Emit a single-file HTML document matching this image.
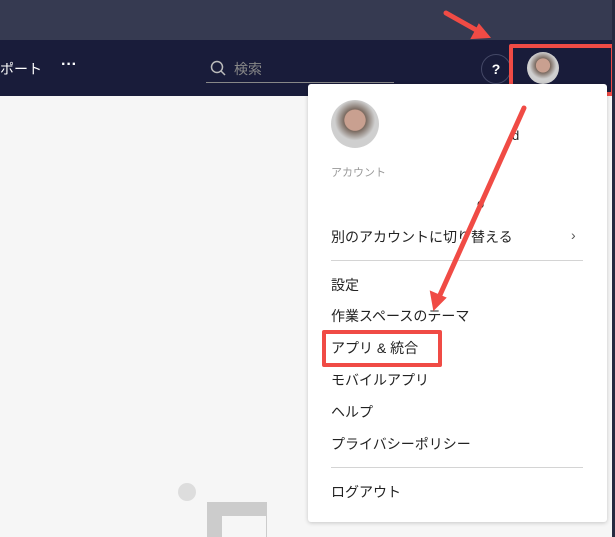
<!DOCTYPE html>
<html><head><meta charset="utf-8"><style>
body{margin:0;width:615px;height:537px;overflow:hidden;position:relative;background:#f6f6f6;font-family:"Liberation Sans","Noto Sans CJK JP",sans-serif}
.top{position:absolute;left:0;top:0;width:615px;height:40px;background:#363a51}
.nav{position:absolute;left:0;top:40px;width:615px;height:56px;background:#191c3a}
.rs{position:absolute;right:0;top:0;width:3px;height:537px;background:#262a40}
.t{position:absolute;white-space:nowrap}
.menu{position:absolute;left:308px;top:84px;width:299px;height:438px;background:#fff;border-radius:3px;box-shadow:0 1px 4px rgba(0,0,0,.2)}
.mi{position:absolute;left:23px;font-size:14px;color:#222;white-space:nowrap}
.hr{position:absolute;left:23px;width:252px;height:1px;background:#d4d4d4}
.av{position:absolute;border-radius:50%;background:radial-gradient(circle at 50% 42%,#c9a090 0 28%,#7a6a60 30%,#cfcfcf 55%);overflow:hidden}
</style></head><body>
<div class="top"></div>
<div class="nav"></div>
<div class="t" style="left:0;top:59px;color:#fff;font-size:14px">ポート</div>
<div class="t" style="left:61px;top:56px;color:#fff;font-size:16px;font-weight:bold">···</div>
<svg style="position:absolute;left:210px;top:60px" width="16" height="16"><circle cx="7" cy="7" r="5.5" fill="none" stroke="#bbb" stroke-width="1.5"/><line x1="11" y1="11" x2="15" y2="15" stroke="#bbb" stroke-width="1.5"/></svg>
<div class="t" style="left:234px;top:59px;color:#888;font-size:14px">検索</div>
<div style="position:absolute;left:206px;top:82px;width:188px;height:1px;background:#888"></div>
<div style="position:absolute;left:481px;top:54px;width:28px;height:28px;border:1px solid #444866;border-radius:50%;color:#fff;font-weight:bold;font-size:14px;text-align:center;line-height:28px">?</div>
<div class="av" style="left:527px;top:52px;width:32px;height:32px"></div>
<div style="position:absolute;left:509px;top:44px;width:98px;height:44px;border:4px solid #f04b45;border-radius:2px"></div>
<div class="menu">
<div class="av" style="left:23px;top:16px;width:48px;height:48px"></div>
<div class="t" style="left:204px;top:44px;font-size:13px;color:#222">d</div>
<div class="t" style="left:23px;top:80px;font-size:11px;color:#999">アカウント</div>
<div class="t" style="left:169px;top:112px;font-size:13px;color:#222">o</div>
<div class="mi" style="top:143px">別のアカウントに切り替える</div>
<div class="t" style="left:263px;top:143px;font-size:14px;color:#555">›</div>
<div class="hr" style="top:176px"></div>
<div class="mi" style="top:191px">設定</div>
<div class="mi" style="top:222px">作業スペースのテーマ</div>
<div class="mi" style="top:254px">アプリ &amp; 統合</div>
<div class="mi" style="top:286px">モバイルアプリ</div>
<div class="mi" style="top:318px">ヘルプ</div>
<div class="mi" style="top:350px">プライバシーポリシー</div>
<div class="hr" style="top:383px"></div>
<div class="mi" style="top:398px">ログアウト</div>
</div>
<div style="position:absolute;left:322px;top:330px;width:112px;height:29px;border:4px solid #f04b45;border-radius:2px"></div>
<div style="position:absolute;left:178px;top:483px;width:18px;height:18px;border-radius:50%;background:#ddd"></div>
<div style="position:absolute;left:207px;top:502px;width:60px;height:35px;background:#ccc"></div>
<div style="position:absolute;left:222px;top:516px;width:44px;height:21px;background:#f6f6f6"></div>
<svg style="position:absolute;left:0;top:0" width="615" height="537">
<g stroke="#f04b45" stroke-width="5" stroke-linecap="round" fill="#f04b45">
<line x1="446" y1="13" x2="478" y2="31"/>
<polygon points="489,37 472,38 479,25" stroke-width="2"/>
<line x1="524" y1="108" x2="440" y2="295"/>
<polygon points="434,309 431,292 445,298" stroke-width="2"/>
</g></svg>
<div class="rs"></div>
</body></html>
